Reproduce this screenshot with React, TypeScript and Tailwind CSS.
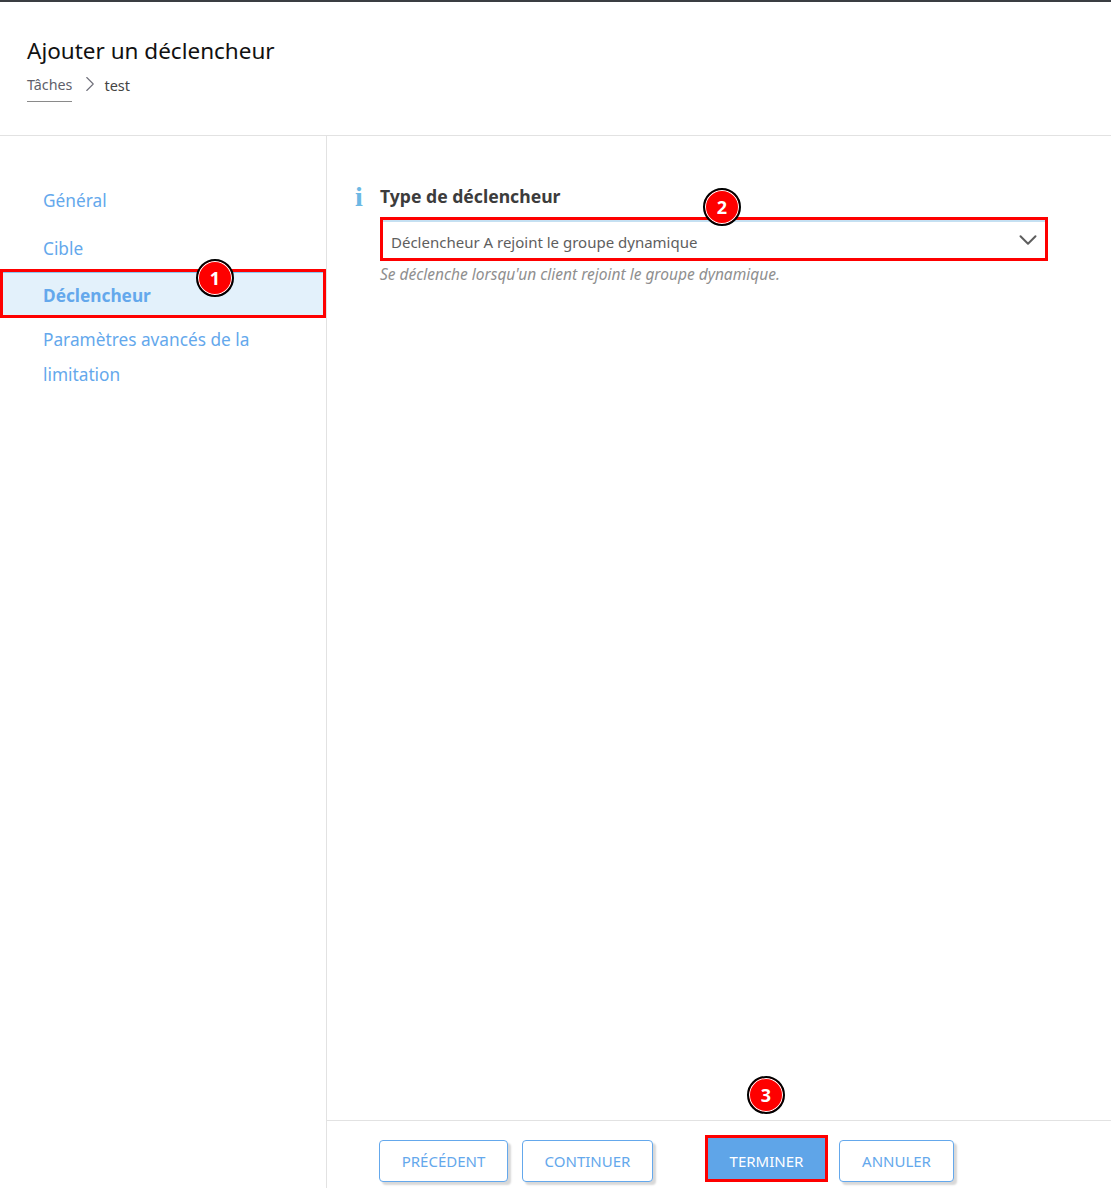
import { ChevronDown, ChevronRight } from "lucide-react";

const Marker = ({ n, className }: { n: number; className: string }) => (
  <span
    className={`absolute z-10 flex h-[38px] w-[38px] items-center justify-center rounded-full border-2 border-black bg-[#fe0000] text-[18px] font-bold text-white shadow-[inset_0_0_0_1px_#fff] ${className}`}
  >
    {n}
  </span>
);

const FooterButton = ({ label, width }: { label: string; width: string }) => (
  <button
    className={`flex h-[42px] items-center justify-center rounded-[4px] border border-[#64a8ec] bg-white text-[15px] text-[#64a8ec] shadow-[3px_3px_2px_#d8d8d8] ${width}`}
  >
    {label}
  </button>
);

export default function App() {
  return (
    <div className="relative flex h-[1188px] w-[1111px] flex-col overflow-hidden border-t-2 border-[#3a3d42] bg-white font-['Noto_Sans',sans-serif]">
      <header className="h-[134px] shrink-0 border-b border-[#e2e2e2] pl-[27px] pt-[32px]">
        <h1 className="text-[22.5px] leading-[34px] text-[#111]">Ajouter un déclencheur</h1>
        <div className="mt-[5px] flex items-start">
          <span className="h-[29px] border-b border-[#8a8a8a] text-[14.3px] leading-[24px] text-[#5f5f6b]">Tâches</span>
          <ChevronRight className="ml-[5px] mt-[-3px] h-[28px] w-[26px] text-[#70707a]" strokeWidth={1} />
          <span className="ml-[1px] text-[14.5px] leading-[24px] text-[#444]">test</span>
        </div>
      </header>

      <div className="flex min-h-0 flex-1">
        <aside className="w-[327px] shrink-0 border-r border-[#e2e2e2] pt-[41px] text-[17.25px] text-[#64a8ec]">
          <div className="h-[48px] pl-[43px] leading-[48px]">Général</div>
          <div className="h-[44px] pl-[43px] leading-[48px]">Cible</div>
          <div className="relative h-[49px] border-[3px] border-[#fe0000] bg-[#e3f1fb] pl-[40px] font-bold leading-[48px] shadow-[inset_0_1px_0_#8cc6f0]">
            Déclencheur
            <Marker n={1} className="left-[193px] top-[-13px]" />
          </div>
          <div className="mt-[4px] pl-[43px] pr-[60px] leading-[35px]">Paramètres avancés de la limitation</div>
        </aside>

        <main className="flex min-w-0 flex-1 flex-col">
          <section className="flex flex-1 pl-[28px] pt-[45px]">
            <span className="w-[25px] font-['Liberation_Serif',serif] text-[28px] font-bold leading-[32px] text-[#6cb8e4]">i</span>
            <div className="w-[668px]">
              <div className="text-[17.6px] font-bold leading-[30px] text-[#3c3c3c]">Type de déclencheur</div>
              <div className="relative mt-[6px] flex h-[44px] items-center justify-between border-[3px] border-[#fe0000] pl-[8px] pr-[2px] pt-[7px] shadow-[inset_0_2px_0_#c5e0f2]">
                <span className="text-[15px] text-[#5e5e5e]">Déclencheur A rejoint le groupe dynamique</span>
                <ChevronDown className="mt-[-5px] h-[30px] w-[30px] text-[#5e5e5e]" strokeWidth={1.6} />
                <Marker n={2} className="left-[320px] top-[-32px]" />
              </div>
              <p className="mt-[1px] text-[15.5px] italic leading-[24px] text-[#8f8f8f]">
                Se déclenche lorsqu'un client rejoint le groupe dynamique.
              </p>
            </div>
          </section>

          <footer className="flex h-[68px] shrink-0 items-start border-t border-[#e2e2e2] pl-[52px] pt-[19px]">
            <FooterButton label="PRÉCÉDENT" width="w-[129px]" />
            <div className="ml-[14px]">
              <FooterButton label="CONTINUER" width="w-[131px]" />
            </div>
            <div className="relative ml-[52px] mt-[-5px]">
              <button className="flex h-[47px] w-[123px] items-center justify-center border-[3px] border-[#fe0000] bg-[#5fa5e8] pt-[5px] text-[15px] text-white">
                TERMINER
              </button>
              <Marker n={3} className="left-[42px] top-[-59px]" />
            </div>
            <div className="ml-[11px]">
              <FooterButton label="ANNULER" width="w-[115px]" />
            </div>
          </footer>
        </main>
      </div>
    </div>
  );
}
